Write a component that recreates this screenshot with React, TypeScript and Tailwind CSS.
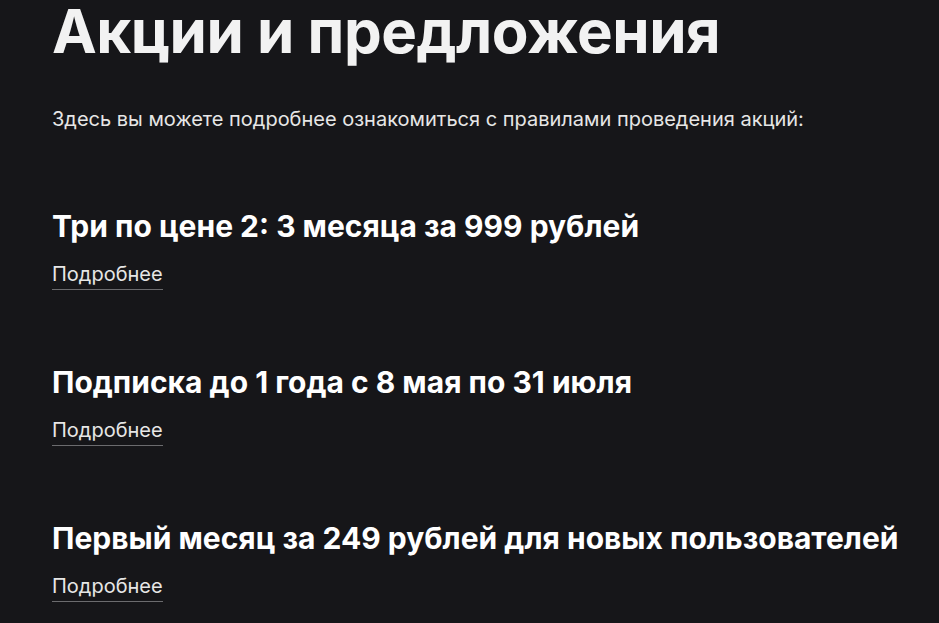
export default function App() {
  const promos = [
    "Три по цене 2: 3 месяца за 999 рублей",
    "Подписка до 1 года с 8 мая по 31 июля",
    "Первый месяц за 249 рублей для новых пользователей",
  ];

  return (
    <div className="min-h-[623px] bg-[#161619] text-white pl-[52px] pr-[20px] font-['Inter',sans-serif] overflow-hidden">
      <h1 className="text-[60px] font-bold leading-[62px] tracking-[-0.5px] text-[#f2f2f2]">
        Акции и предложения
      </h1>

      <p className="mt-[45px] text-[20px] leading-[24px] text-[#e6e6e6]">
        Здесь вы можете подробнее ознакомиться с правилами проведения акций:
      </p>

      <div className="mt-[77px] flex flex-col gap-[74px]">
        {promos.map((title) => (
          <div key={title} className="flex flex-col items-start">
            <h2 className="text-[30px] font-bold leading-[36px] text-white whitespace-nowrap">{title}</h2>
            <a className="mt-[18px] pb-[3px] text-[20px] leading-[24px] text-[#e6e6e6] border-b border-[#6b6b6e] cursor-pointer">
              Подробнее
            </a>
          </div>
        ))}
      </div>
    </div>
  );
}
